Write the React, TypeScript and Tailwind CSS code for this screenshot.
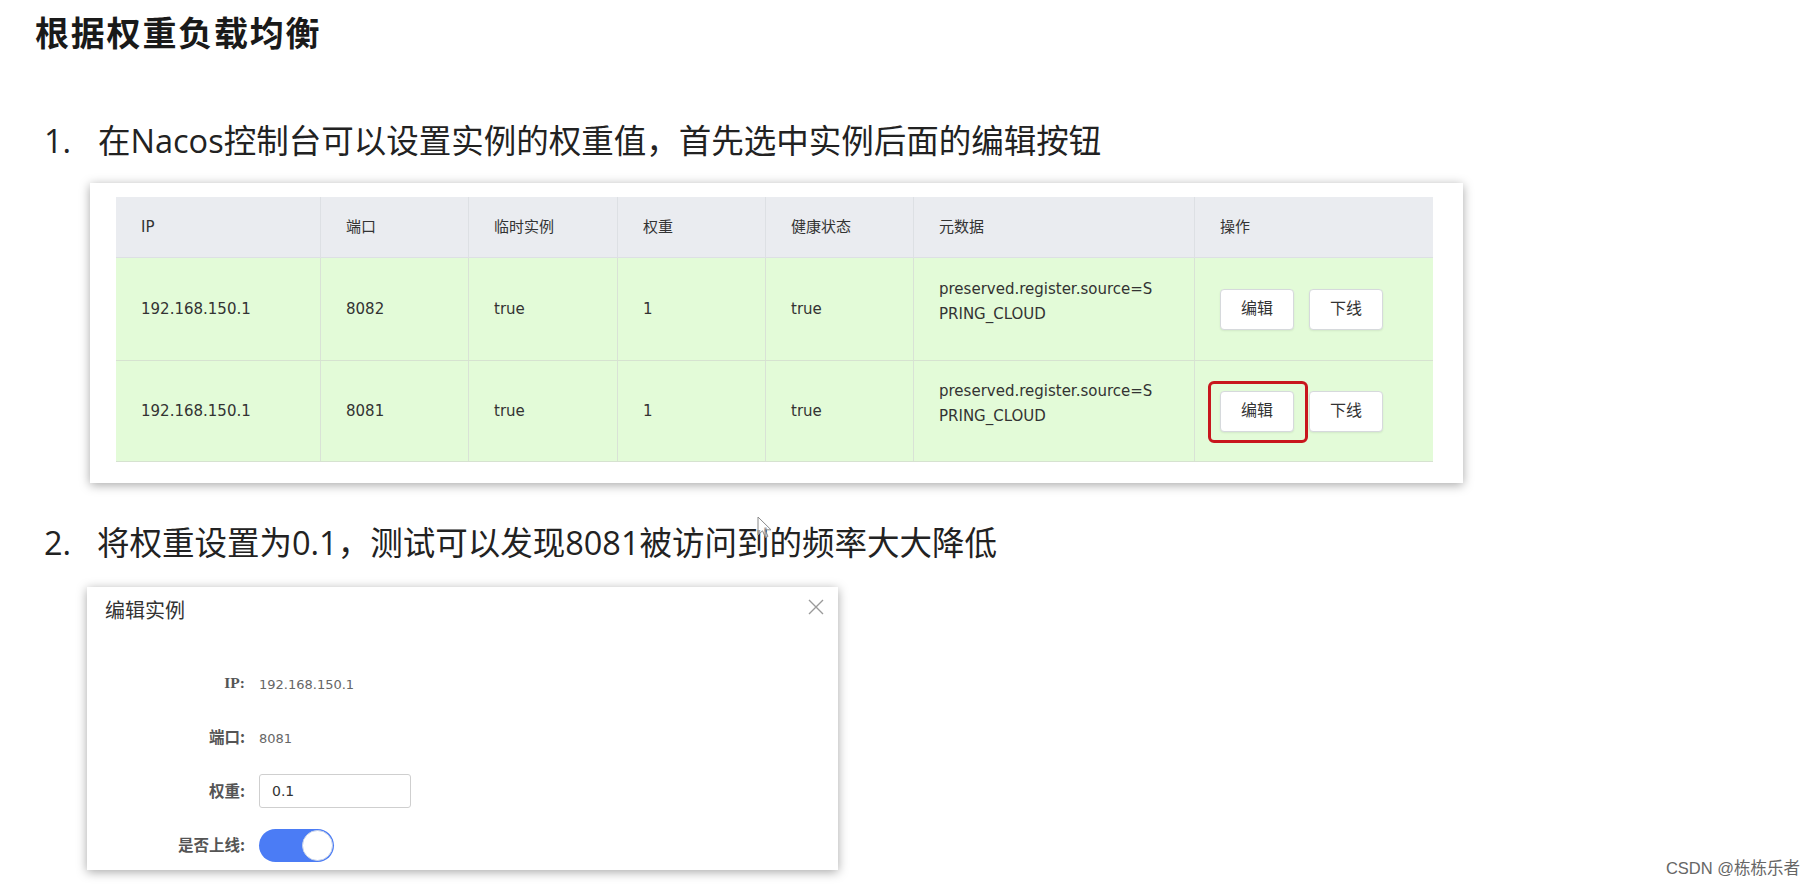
import React from "react";

const GRID = "grid grid-cols-[205px_148px_149px_148px_148px_281px_238px]";
const CELL = "flex items-center pl-[25px] border-r border-[#d9e2d6]";

function Btn({ label }: { label: string }) {
  return (
    <div className="w-[74px] h-[41px] flex items-center justify-center bg-white border border-[#d6d9dc] rounded-[4px] text-[16px] text-[#333] shadow-[0_1px_2px_rgba(0,0,0,0.08)]">
      {label}
    </div>
  );
}

function Row({ port, highlight, h }: { port: string; highlight?: boolean; h: string }) {
  return (
    <div className={`${GRID} ${h} bg-[#e3fbd8] border-b border-[#d6e2d0]`}>
      <div className={CELL}>192.168.150.1</div>
      <div className={CELL}>{port}</div>
      <div className={CELL}>true</div>
      <div className={CELL}>1</div>
      <div className={CELL}>true</div>
      <div className={`${CELL} pb-[14px]`}>
        <div className="leading-[25px]">
          <div>preserved.register.source=S</div>
          <div>PRING_CLOUD</div>
        </div>
      </div>
      <div className="flex items-center pl-[25px] gap-[15px]">
        <div className="relative">
          {highlight && (
            <span className="absolute left-[-12px] top-[-10px] right-[-14px] bottom-[-11px] border-[3px] border-[#c8161d] rounded-[6px]" />
          )}
          <Btn label="编辑" />
        </div>
        <Btn label="下线" />
      </div>
    </div>
  );
}

function FormRow({ label, children, serif }: { label: string; children: React.ReactNode; serif?: boolean }) {
  return (
    <div className="flex items-center h-[36px]">
      <div
        className={`w-[158px] text-right text-[15.5px] font-bold text-[#555] ${
          serif ? "font-['Liberation_Serif','Noto_Sans_CJK_SC',serif]" : "font-['Noto_Sans_CJK_SC',sans-serif]"
        }`}
      >
        {label}
      </div>
      <div className="ml-[14px]">{children}</div>
    </div>
  );
}

export default function App() {
  return (
    <div className="relative w-[1817px] h-[887px] bg-white overflow-hidden font-['Open_Sans','Noto_Sans_CJK_SC',sans-serif]">
      <h1 className="pl-[35px] pt-[12px] h-[52px] text-[34px] leading-[40px] font-bold tracking-[1.8px] text-[#1a1a1a] font-['Noto_Sans_CJK_SC',sans-serif]">
        根据权重负载均衡
      </h1>

      <div className="mt-[69px] flex items-center h-[40px] pl-[44px] text-[32.5px] text-[#222]">
        <span className="w-[54px]">1.</span>
        <span>在Nacos控制台可以设置实例的权重值，首先选中实例后面的编辑按钮</span>
      </div>

      <div className="mt-[22px] ml-[90px] w-[1373px] h-[300px] bg-white pt-[14px] pl-[26px] shadow-[0_2px_10px_rgba(0,0,0,0.35)]">
        <div className="w-[1317px] text-[15px] text-[#333] font-['DejaVu_Sans','Noto_Sans_CJK_SC',sans-serif]">
          <div className={`${GRID} h-[61px] bg-[#eaecf0] border-b border-[#dde0e4]`}>
            <div className={`${CELL} border-[#dde0e4]`}>IP</div>
            <div className={`${CELL} border-[#dde0e4]`}>端口</div>
            <div className={`${CELL} border-[#dde0e4]`}>临时实例</div>
            <div className={`${CELL} border-[#dde0e4]`}>权重</div>
            <div className={`${CELL} border-[#dde0e4]`}>健康状态</div>
            <div className={`${CELL} border-[#dde0e4]`}>元数据</div>
            <div className="flex items-center pl-[25px]">操作</div>
          </div>
          <Row port="8082" h="h-[103px]" />
          <Row port="8081" h="h-[101px]" highlight />
        </div>
      </div>

      <div className="mt-[40px] flex items-center h-[40px] pl-[44px] text-[32.5px] text-[#222]">
        <span className="w-[53px]">2.</span>
        <span>将权重设置为0.1，测试可以发现8081被访问到的频率大大降低</span>
      </div>

      <div className="relative mt-[24px] ml-[87px] w-[751px] h-[283px] bg-white shadow-[0_2px_10px_rgba(0,0,0,0.35)]">
        <div className="h-[46px] flex items-center pl-[18px] text-[20px] text-[#333] font-['Noto_Sans_CJK_SC',sans-serif]">
          编辑实例
        </div>
        <svg className="absolute right-[14px] top-[12px]" width="16" height="16" viewBox="0 0 16 16">
          <path d="M1 1 L15 15 M15 1 L1 15" stroke="#9a9a9a" strokeWidth="1.4" fill="none" />
        </svg>
        <div className="mt-[32px] flex flex-col gap-[18px]">
          <FormRow label="IP:" serif>
            <span className="text-[13px] text-[#666] font-['DejaVu_Sans',sans-serif]">192.168.150.1</span>
          </FormRow>
          <FormRow label="端口:">
            <span className="text-[13px] text-[#666] font-['DejaVu_Sans',sans-serif]">8081</span>
          </FormRow>
          <FormRow label="权重:">
            <div className="w-[152px] h-[34px] flex items-center pl-[12px] border border-[#cfcfcf] rounded-[3px] text-[14px] text-[#333] font-['DejaVu_Sans',sans-serif]">
              0.1
            </div>
          </FormRow>
          <FormRow label="是否上线:">
            <div className="relative w-[75px] h-[33px] rounded-full bg-[#4b7cf5]">
              <span className="absolute right-[1px] top-[1px] w-[31px] h-[31px] rounded-full bg-white border border-[#c7d2e8]" />
            </div>
          </FormRow>
        </div>
      </div>

      <svg className="absolute left-[757px] top-[516px]" width="16" height="24" viewBox="0 0 16 24">
        <path
          d="M1 1 L1 19 L5.5 14.8 L8.6 21.5 L11 20.4 L8 13.8 L14 13.8 Z"
          fill="rgba(255,255,255,0.6)"
          stroke="#8a8a8a"
          strokeWidth="1"
        />
      </svg>

      <div className="absolute right-[17px] bottom-[9px] text-[16.5px] leading-[20px] text-[#666] font-['Liberation_Sans','Noto_Sans_CJK_SC',sans-serif]">
        CSDN @栋栋乐者
      </div>
    </div>
  );
}
